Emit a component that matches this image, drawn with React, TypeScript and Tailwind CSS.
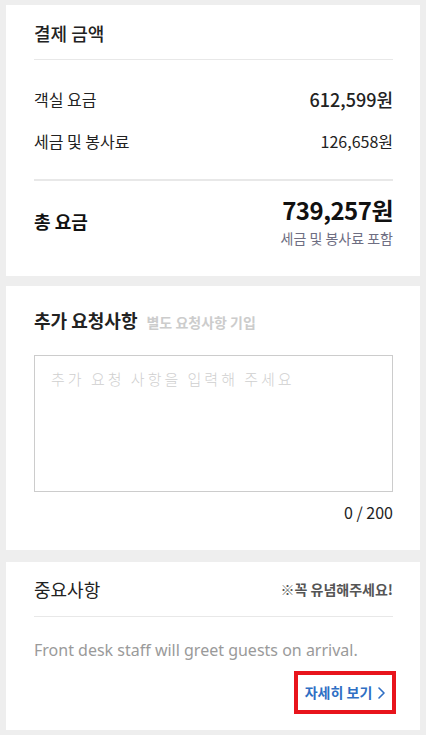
import React from "react";

const font = { fontFamily: '"Noto Sans CJK KR", "Noto Sans", sans-serif' };

export default function App() {
  return (
    <div className="min-h-[735px] w-[426px] bg-[#eeeeee] px-[6px] pt-[5px] pb-[5px] text-[#222222]" style={font}>
      {/* Card 1 */}
      <section className="bg-white pl-[28px] pr-[27px] pt-[15px] pb-[29px]">
        <h2 className="text-[18px] leading-[27px] font-medium text-[#222222]">결제 금액</h2>
        <div className="mt-[12px] h-px bg-[#e8e8e8]" />
        <div className="pt-[18px]">
          <div className="flex h-[42px] items-center justify-between">
            <span className="text-[16px] text-[#222222]">객실 요금</span>
            <span className="text-[18px] font-medium text-[#222222]">612,599원</span>
          </div>
          <div className="flex h-[42px] items-center justify-between">
            <span className="text-[16px] text-[#222222]">세금 및 봉사료</span>
            <span className="text-[16px] text-[#222222]">126,658원</span>
          </div>
        </div>
        <div className="mt-[17px] h-[2px] bg-[#e8e8e8]" />
        <div className="flex items-center justify-between pt-[14px]">
          <span className="text-[18px] font-bold text-[#111111]">총 요금</span>
          <div className="flex flex-col items-end">
            <span className="text-[24px] leading-[30px] font-bold tracking-[-0.5px] text-[#111111]">739,257원</span>
            <span className="mt-[4px] text-[14px] leading-[18px] text-[#6e6e82]">세금 및 봉사료 포함</span>
          </div>
        </div>
      </section>

      {/* Card 2 */}
      <section className="mt-[10px] bg-white pl-[28px] pr-[27px] pt-[21px] pb-[26px]">
        <div className="flex items-baseline gap-[9px]">
          <h2 className="text-[18px] leading-[27px] font-bold text-[#222222]">추가 요청사항</h2>
          <span className="text-[14px] font-bold text-[#cccccc]">별도 요청사항 기입</span>
        </div>
        <textarea
          className="mt-[21px] block h-[137px] w-full resize-none border border-[#cccccc] px-[16px] py-[11px] text-[15px] leading-[24px] tracking-[3px] text-[#333333] outline-none placeholder:text-[#cfcfcf] placeholder:font-light"
          style={font}
          placeholder="추가 요청 사항을 입력해 주세요"
        />
        <div className="mt-[8px] text-right text-[16px] leading-[24px] text-[#222222]">0 / 200</div>
      </section>

      {/* Card 3 */}
      <section className="mt-[12px] bg-white pl-[28px] pr-[27px] pt-[14px] pb-[16px]">
        <div className="flex items-center justify-between">
          <h2 className="text-[18px] leading-[27px] text-[#222222]">중요사항</h2>
          <span className="text-[14px] font-bold text-[#555555]">※꼭 유념해주세요!</span>
        </div>
        <div className="mt-[13px] h-px bg-[#e8e8e8]" />
        <p className="mt-[21px] text-[16px] leading-[24px] text-[#9a9a9a]" style={{ fontFamily: '"Noto Sans", "Noto Sans CJK KR", sans-serif' }}>
          Front desk staff will greet guests on arrival.
        </p>
        <div className="mt-[9px] flex justify-end">
          <a className="-mr-[3px] flex h-[43px] w-[102px] items-center justify-center gap-[6px] border-4 border-[#e8141c] text-[14px] font-bold text-[#2f6fc4]">
            <span>자세히 보기</span>
            <svg width="7" height="12" viewBox="0 0 7 12" fill="none">
              <path d="M1 1l5 5-5 5" stroke="#2f6fc4" strokeWidth="1.6" strokeLinecap="round" strokeLinejoin="round" />
            </svg>
          </a>
        </div>
      </section>
    </div>
  );
}
